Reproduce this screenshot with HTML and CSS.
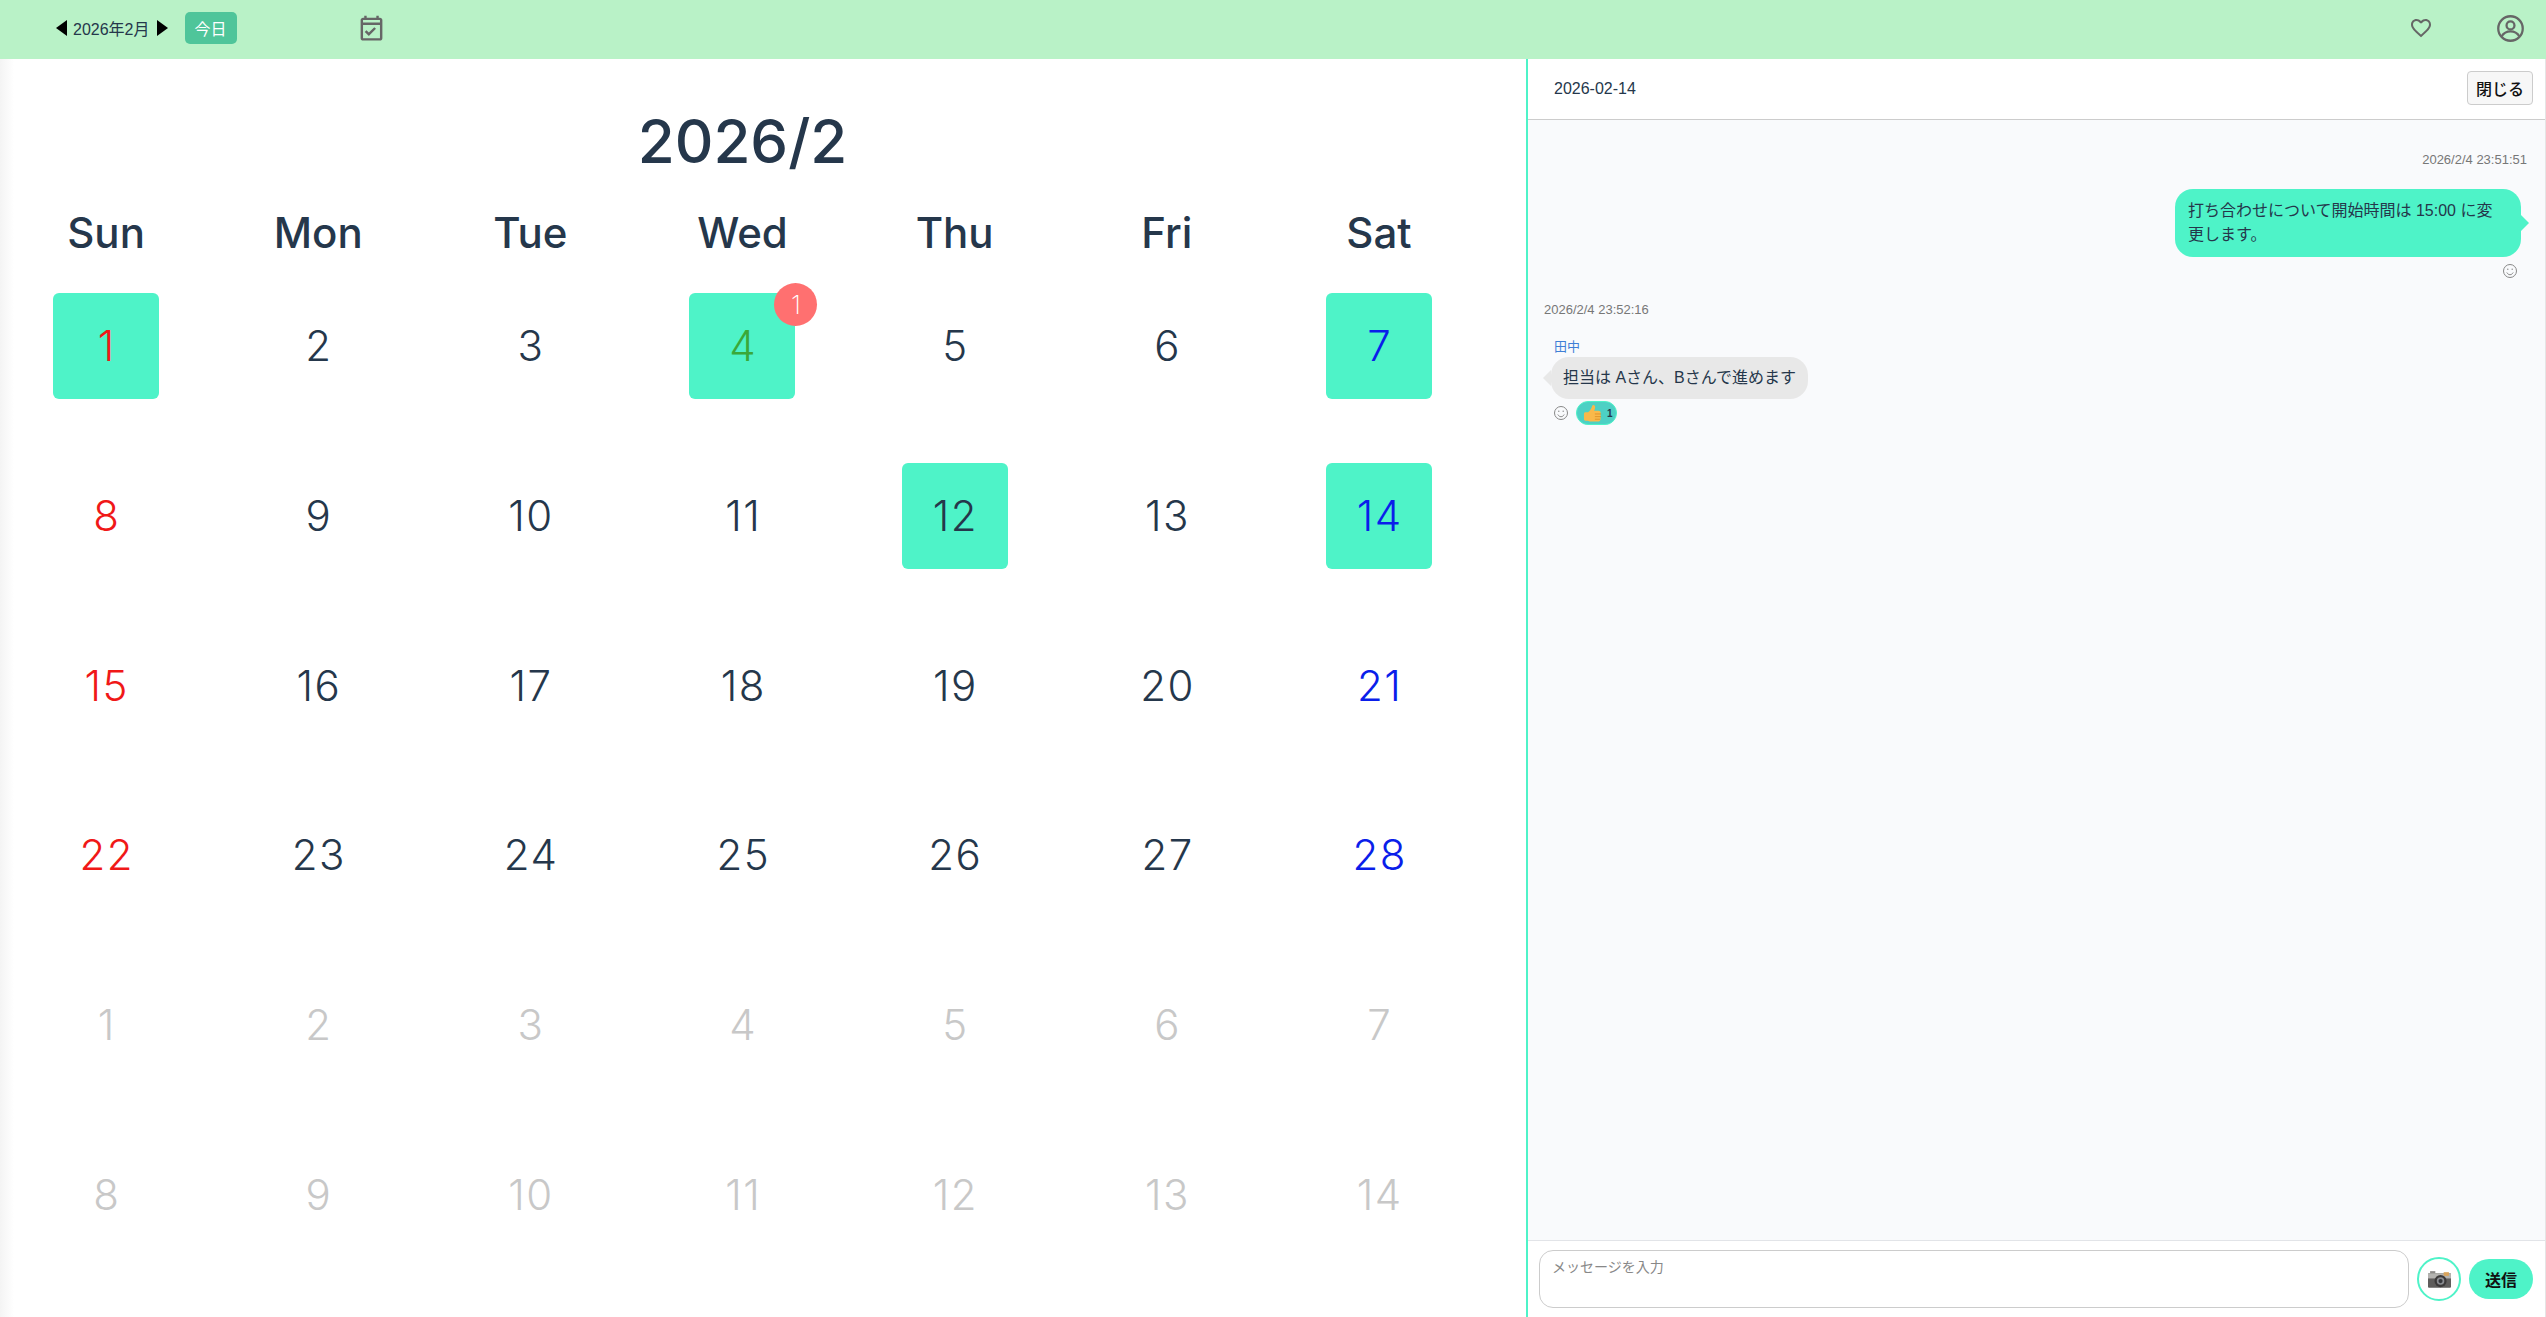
FILE: index.html
```html
<!DOCTYPE html>
<html lang="ja">
<head>
    <meta charset="UTF-8">
    <meta name="viewport" content="width=device-width, initial-scale=1.0">
    <title>カレンダー</title>
    <link rel="stylesheet" href="styles.css">
</head>
<body>
    <header class="topbar">
        <div class="month-nav">
            <button class="arrow arrow-prev" aria-label="前の月"></button>
            <span class="month-label">2026年2月</span>
            <button class="arrow arrow-next" aria-label="次の月"></button>
        </div>
        <button class="today-btn">今日</button>
        <svg class="icon-event" viewBox="0 0 24 24"><path d="M19 3h-1V1.500h-2V3H8V1.500H6V3H5C3.900 3 3 3.900 3 5v15c0 1.100.9 2 2 2h14c1.100 0 2-.9 2-2V5c0-1.100-.9-2-2-2zm0 17H5V9h14v11zm0-13H5V5h14v2zm-9.200 11.200 5.900-5.900-1.400-1.400-4.500 4.500-2-2-1.400 1.400 3.400 3.400z"/></svg>
        <div class="topbar-right">
            <svg class="icon-heart" viewBox="0 0 24 24"><path d="M16.500 3c-1.740 0-3.410.81-4.500 2.090C10.910 3.810 9.240 3 7.500 3 4.420 3 2 5.420 2 8.500c0 3.780 3.400 6.860 8.550 11.540L12 21.350l1.450-1.320C18.600 15.360 22 12.280 22 8.500 22 5.420 19.580 3 16.500 3zm-4.400 15.550-.1.1-.1-.1C7.140 14.240 4 11.390 4 8.500 4 6.500 5.500 5 7.500 5c1.540 0 3.040.99 3.570 2.360h1.870C13.460 5.990 14.960 5 16.500 5c2 0 3.500 1.500 3.500 3.500 0 2.890-3.140 5.740-7.900 10.050z"/></svg>
            <svg class="icon-user" viewBox="0 0 26 26"><circle cx="13" cy="13" r="11.800"/><circle cx="13" cy="10" r="3.800"/><path d="M4.500 20.500c2-3.400 5-4.800 8.500-4.800s6.500 1.400 8.500 4.800"/></svg>
        </div>
    </header>

    <main class="layout">
        <section class="calendar">
            <h1 class="cal-title">2026/2</h1>
            <div class="weekdays">
                <div>Sun</div><div>Mon</div><div>Tue</div><div>Wed</div><div>Thu</div><div>Fri</div><div>Sat</div>
            </div>
            <div class="days">
                <div class="day"><span class="num sun has-msg">1</span></div>
                <div class="day"><span class="num">2</span></div>
                <div class="day"><span class="num">3</span></div>
                <div class="day"><span class="num today has-msg">4<span class="badge">1</span></span></div>
                <div class="day"><span class="num">5</span></div>
                <div class="day"><span class="num">6</span></div>
                <div class="day"><span class="num sat has-msg">7</span></div>

                <div class="day"><span class="num sun">8</span></div>
                <div class="day"><span class="num">9</span></div>
                <div class="day"><span class="num">10</span></div>
                <div class="day"><span class="num">11</span></div>
                <div class="day"><span class="num has-msg">12</span></div>
                <div class="day"><span class="num">13</span></div>
                <div class="day"><span class="num sat has-msg">14</span></div>

                <div class="day"><span class="num sun">15</span></div>
                <div class="day"><span class="num">16</span></div>
                <div class="day"><span class="num">17</span></div>
                <div class="day"><span class="num">18</span></div>
                <div class="day"><span class="num">19</span></div>
                <div class="day"><span class="num">20</span></div>
                <div class="day"><span class="num sat">21</span></div>

                <div class="day"><span class="num sun">22</span></div>
                <div class="day"><span class="num">23</span></div>
                <div class="day"><span class="num">24</span></div>
                <div class="day"><span class="num">25</span></div>
                <div class="day"><span class="num">26</span></div>
                <div class="day"><span class="num">27</span></div>
                <div class="day"><span class="num sat">28</span></div>

                <div class="day"><span class="num other">1</span></div>
                <div class="day"><span class="num other">2</span></div>
                <div class="day"><span class="num other">3</span></div>
                <div class="day"><span class="num other">4</span></div>
                <div class="day"><span class="num other">5</span></div>
                <div class="day"><span class="num other">6</span></div>
                <div class="day"><span class="num other">7</span></div>

                <div class="day"><span class="num other">8</span></div>
                <div class="day"><span class="num other">9</span></div>
                <div class="day"><span class="num other">10</span></div>
                <div class="day"><span class="num other">11</span></div>
                <div class="day"><span class="num other">12</span></div>
                <div class="day"><span class="num other">13</span></div>
                <div class="day"><span class="num other">14</span></div>
            </div>
        </section>

        <aside class="chat">
            <div class="chat-head">
                <span class="chat-date">2026-02-14</span>
                <button class="close-btn">閉じる</button>
            </div>

            <div class="chat-log">
                <div class="msg mine">
                    <div class="stamp">2026/2/4 23:51:51</div>
                    <div class="bubble">打ち合わせについて開始時間は 15:00 に変更します。</div>
                    <div class="react-row">
                        <svg class="smile" viewBox="0 0 16 16"><circle cx="8" cy="8" r="6.500"/><circle class="eye" cx="5.800" cy="6.300" r=".7"/><circle class="eye" cx="10.200" cy="6.300" r=".7"/><path d="M4.800 9.500c.8 1.500 1.900 2.200 3.200 2.200s2.400-.7 3.200-2.200"/></svg>
                    </div>
                </div>

                <div class="msg theirs">
                    <div class="stamp">2026/2/4 23:52:16</div>
                    <div class="sender">田中</div>
                    <div class="bubble">担当は Aさん、Bさんで進めます</div>
                    <div class="react-row">
                        <svg class="smile" viewBox="0 0 16 16"><circle cx="8" cy="8" r="6.500"/><circle class="eye" cx="5.800" cy="6.300" r=".7"/><circle class="eye" cx="10.200" cy="6.300" r=".7"/><path d="M4.800 9.500c.8 1.500 1.900 2.200 3.200 2.200s2.400-.7 3.200-2.200"/></svg>
                        <span class="reaction">
                            <svg class="thumb" viewBox="0 0 20 20"><path fill="#f9b94a" d="M1 10.500c0-1 .7-1.700 1.700-1.700h2.500c1.500-1 3.200-3 4-5.300.3-1 .5-2.500 1.800-2.500 1.500 0 2 1.700 1.700 3.300-.2 1.100-.6 2-1 2.900h4.800c1.200 0 2 .8 2 1.800v6.500c0 2-1.300 3-3 3H8c-1.200 0-2-.7-3-1H2.700c-1 0-1.700-.7-1.700-1.700z"/><path fill="none" stroke="#d98f26" stroke-width=".9" d="M12.500 10.500H19M12.500 13.300H19M12.500 16H18"/></svg>
                            <span class="react-count">1</span>
                        </span>
                    </div>
                </div>
            </div>

            <div class="chat-input">
                <textarea class="input-box" placeholder="メッセージを入力"></textarea>
                <button class="camera-btn" aria-label="写真">
                    <svg viewBox="0 0 22 16" class="camera"><rect x="0" y="2" width="22" height="14" rx="1" fill="#5f5d5c"/><rect x="0" y="2" width="22" height="5" fill="#b4b3b0"/><rect x="2" y="0" width="5" height="2" fill="#8d8b89"/><rect x="15" y="1" width="5" height="3.500" fill="#d9a35a"/><circle cx="12" cy="9.500" r="5.800" fill="#3c3a3a"/><circle cx="12" cy="9.500" r="3.600" fill="#8b8d92"/><circle cx="12" cy="9.500" r="2" fill="#36373b"/></svg>
                </button>
                <button class="send-btn">送信</button>
            </div>
        </aside>
    </main>
</body>
</html>
```

FILE: styles.css
```css
* {
    box-sizing: border-box;
}

body {
    margin: 0;
    height: 100vh;
    overflow: hidden;
    display: flex;
    flex-direction: column;
    font-family: "Liberation Sans", "Noto Sans CJK JP", sans-serif;
    color: #25374b;
    background: #fff;
}

button {
    font-family: inherit;
    cursor: pointer;
}

/* top bar */
.topbar {
    height: 59px;
    flex: none;
    display: flex;
    align-items: center;
    padding: 0 0 3px 56px;
    background: #b9f2c7;
}

.month-nav {
    display: flex;
    align-items: center;
    gap: 6px;
}

.arrow {
    width: 0;
    height: 0;
    padding: 0;
    background: none;
    border-style: solid;
    border-color: transparent;
    border-width: 8px 0;
}

.arrow-prev {
    border-right: 11px solid #000;
}

.arrow-next {
    margin-left: 1px;
    border-left: 11px solid #000;
}

.month-label {
    font-size: 16px;
}

.today-btn {
    width: 52px;
    height: 32px;
    margin-left: 17px;
    padding: 0;
    border: none;
    border-radius: 5px;
    background: #4fc59a;
    color: #fff;
    font-size: 16px;
}

.icon-event {
    width: 29px;
    height: 29px;
    margin-left: 120px;
    fill: #666;
}

.topbar-right {
    margin-left: auto;
    display: flex;
    align-items: center;
    gap: 64px;
    padding-right: 22px;
}

.icon-heart {
    width: 24px;
    height: 24px;
    fill: #666;
}

.icon-user {
    width: 27px;
    height: 27px;
    fill: none;
    stroke: #666;
    stroke-width: 2.2;
}

/* main area */
.layout {
    flex: 1;
    min-height: 0;
    display: flex;
}

.calendar {
    width: 1526px;
    flex: none;
    padding: 46px 41px 0 0;
    background: linear-gradient(90deg, #f4f4f4 0, #fff 14px);
}

.cal-title {
    margin: 0 0 26px;
    text-align: center;
    font-family: Inter, sans-serif;
    font-size: 60px;
    line-height: 72px;
    font-weight: 500;
}

.weekdays {
    display: grid;
    grid-template-columns: repeat(7, 1fr);
    height: 58px;
    align-items: center;
    text-align: center;
    font-family: Inter, sans-serif;
    font-size: 42px;
    font-weight: 500;
}

.days {
    display: grid;
    grid-template-columns: repeat(7, 1fr);
    grid-auto-rows: 169.7px;
}

.day {
    display: flex;
    align-items: center;
    justify-content: center;
}

.num {
    position: relative;
    width: 106px;
    height: 106px;
    display: flex;
    align-items: center;
    justify-content: center;
    padding-left: 1.5px;
    border-radius: 6px;
    font-family: Inter, sans-serif;
    font-size: 42px;
    font-weight: 300;
    letter-spacing: 1.5px;
}

.has-msg {
    background: #4ef3c8;
}

.sun {
    color: #f01818;
}

.sat {
    color: #0a1eea;
}

.today {
    color: #3aa83a;
}

.other {
    color: #c8c8c8;
}

.badge {
    position: absolute;
    top: -10px;
    right: -22px;
    width: 43px;
    height: 43px;
    display: flex;
    align-items: center;
    justify-content: center;
    border-radius: 50%;
    background: #ff7070;
    color: #fff;
    font-size: 26px;
    font-weight: 200;
    letter-spacing: 0;
}

/* chat panel */
.chat {
    flex: 1;
    min-width: 0;
    display: flex;
    flex-direction: column;
    border-left: 2px solid #4ef3c8;
    border-right: 1px solid #e5e5e5;
}

.chat-head {
    height: 61px;
    flex: none;
    display: flex;
    align-items: center;
    justify-content: space-between;
    padding: 0 12px 0 26px;
    background: #fff;
    border-bottom: 1px solid #ccc;
}

.chat-date {
    font-size: 16px;
}

.close-btn {
    width: 66px;
    height: 34px;
    margin-top: -2px;
    padding: 0;
    border: 1px solid #ccc;
    border-radius: 4px;
    background: #f7f7f7;
    color: #111;
    font-size: 16px;
    font-weight: 500;
}

.chat-log {
    flex: 1;
    min-height: 0;
    padding: 32px 18px 0 16px;
    background: #f9fafc;
}

.stamp {
    font-size: 13px;
    line-height: 16px;
    color: #777;
}

.msg.mine {
    display: flex;
    flex-direction: column;
    align-items: flex-end;
}

.bubble {
    position: relative;
    font-size: 16px;
    line-height: 24px;
    border-radius: 18px;
}

.mine .bubble {
    width: 346px;
    margin: 21px 6px 0 0;
    padding: 10px 13px;
    background: #4ef3c8;
}

.mine .bubble::after {
    content: "";
    position: absolute;
    top: 26px;
    right: -8px;
    border-style: solid;
    border-width: 8px 0 8px 8px;
    border-color: transparent transparent transparent #4ef3c8;
}

.theirs .bubble {
    display: inline-block;
    margin: 2px 0 0 7px;
    padding: 9px 12px;
    background: #e8e8e8;
}

.theirs .bubble::before {
    content: "";
    position: absolute;
    top: 13px;
    left: -8px;
    border-style: solid;
    border-width: 8px 8px 8px 0;
    border-color: transparent #e8e8e8 transparent transparent;
}

.sender {
    margin: 21px 0 0 10px;
    font-size: 13px;
    line-height: 16px;
    color: #3f7fd6;
}

.react-row {
    display: flex;
    align-items: center;
}

.mine .react-row {
    margin: 6px 9px 0 0;
}

.theirs .react-row {
    gap: 7px;
    margin: 2px 0 0 9px;
}

.smile {
    width: 16px;
    height: 16px;
    fill: none;
    stroke: #888;
    stroke-width: 1;
}

.smile .eye {
    fill: #888;
    stroke: none;
}

.msg.theirs {
    margin-top: 23px;
}

.reaction {
    width: 41px;
    height: 24px;
    display: flex;
    align-items: center;
    gap: 5px;
    padding-left: 6px;
    border-radius: 12px;
    background: #4dd0c4;
    border: 1px solid #4ef3c8;
}

.thumb {
    width: 19px;
    height: 19px;
}

.react-count {
    font-size: 10px;
    font-weight: 700;
}

/* input row */
.chat-input {
    height: 77px;
    flex: none;
    display: flex;
    align-items: center;
    padding: 0 12px 0 11px;
    background: #fff;
    border-top: 1px solid #e2e4e8;
}

.input-box {
    width: 870px;
    height: 58px;
    padding: 5px 12px;
    border: 1px solid #ccc;
    border-radius: 14px;
    resize: none;
    font-family: inherit;
    font-size: 14px;
    outline: none;
}

.input-box::placeholder {
    color: #888;
}

.camera-btn {
    width: 44px;
    height: 44px;
    margin-left: 8px;
    padding: 0;
    display: flex;
    align-items: center;
    justify-content: center;
    border: 2px solid #4ef3c8;
    border-radius: 50%;
    background: #fff;
}

.camera {
    width: 23px;
    height: 17px;
}

.send-btn {
    width: 64px;
    height: 40px;
    margin-left: 8px;
    padding: 0;
    border: none;
    border-radius: 20px;
    background: #4ef3c8;
    color: #111;
    font-size: 16px;
    font-weight: 700;
}
```
